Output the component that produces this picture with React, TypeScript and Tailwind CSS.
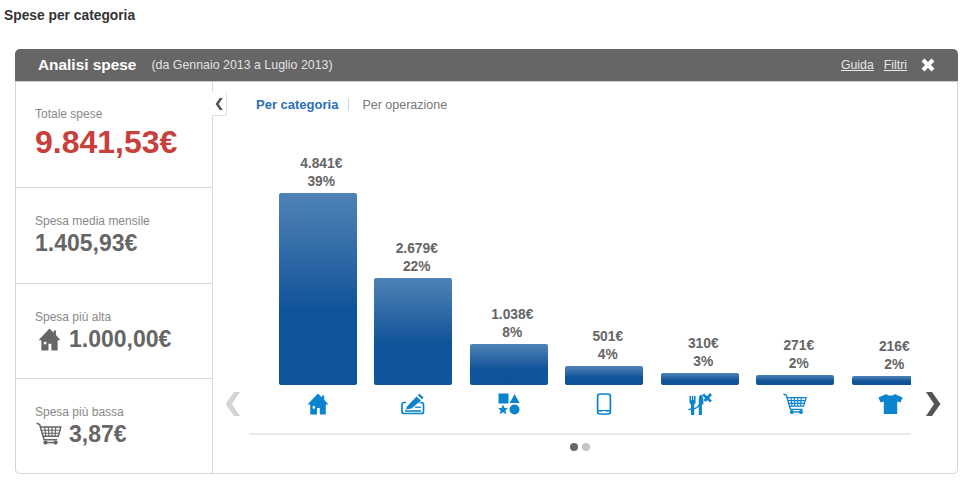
import { ReactNode } from "react";

const BLUE = "#0b84cf";

function HouseIcon({ color = BLUE, size = 22 }: { color?: string; size?: number }) {
  return (
    <svg width={size} height={size} viewBox="0 0 22 22">
      <path
        fill={color}
        d="M11 0.5 L15 4.5 V2.5 H17.2 V6.7 L21.5 11.6 H18.8 V21.5 H12.8 V15 H10 V21.5 H3.2 V11.6 H0.5 Z"
      />
      <rect x="5.6" y="13.2" width="2.4" height="2.4" fill="#fff" />
    </svg>
  );
}

function CheckIcon() {
  return (
    <svg width="24" height="22" viewBox="0 0 24 22">
      <rect x="1" y="9.5" width="21.5" height="11" rx="2" fill="none" stroke={BLUE} strokeWidth="1.7" />
      <path fill="#fff" d="M5 9 L17 0 L24 6 L12 14 H6 Z" />
      <path fill={BLUE} d="M6 13.5 L15.5 3.5 L20 7.5 L10.5 15.5 L5 16.5 Z" />
      <path fill={BLUE} d="M16.8 2.3 L18.4 0.8 L22.6 4.6 L21 6.2 Z" />
      <path stroke={BLUE} strokeWidth="1.6" d="M4 18 H20" />
      <path stroke={BLUE} strokeWidth="1.3" d="M14 14.2 H20" />
    </svg>
  );
}

function ShapesIcon() {
  return (
    <svg width="22" height="22" viewBox="0 0 22 22">
      <rect x="0.5" y="0.5" width="10" height="10" fill={BLUE} />
      <path fill={BLUE} d="M16.6 1 L21.6 10 H11.6 Z" />
      <path
        fill={BLUE}
        d="M5 11.6 L6.5 15 L10 15.3 L7.4 17.6 L8.2 21.2 L5 19.3 L1.8 21.2 L2.6 17.6 L0 15.3 L3.5 15 Z"
      />
      <circle cx="16.5" cy="16.5" r="5" fill={BLUE} />
    </svg>
  );
}

function PhoneIcon() {
  return (
    <svg width="16" height="22" viewBox="0 0 16 22">
      <rect x="1.6" y="1" width="12.8" height="20" rx="2.4" fill="none" stroke={BLUE} strokeWidth="1.7" />
      <path stroke={BLUE} strokeWidth="1.6" d="M2 17.8 H14" />
      <rect x="6.6" y="18" width="2.8" height="2" fill="#fff" />
    </svg>
  );
}

function DiningIcon() {
  return (
    <svg width="24" height="22" viewBox="0 0 24 22">
      <path fill={BLUE} d="M1.5 3 H3 V7 H3.8 V3 H5.3 V7 H6.1 V3 H7.6 V10 L6.2 11.5 V22 H3 V11.5 L1.5 10 Z" />
      <path fill={BLUE} d="M13 1.5 C15.4 3 15.6 7 15.4 11.5 H13.9 V22 H10.8 V6 C10.8 4 11.6 2.4 13 1.5 Z" />
      <path stroke={BLUE} strokeWidth="1.5" fill="none" d="M0.5 16.5 C4 16.5 8 15.8 11 13 M9.8 12.8 L12.4 12.2" />
      <path stroke={BLUE} strokeWidth="2.8" d="M15 1.5 L23 8.5 M23 1 L16.5 8" />
    </svg>
  );
}

function CartIcon({ color = BLUE, size = 24 }: { color?: string; size?: number }) {
  return (
    <svg width={size} height={size * (22 / 24)} viewBox="0 0 24 22">
      <path stroke={color} strokeWidth="1.4" fill="none" d="M0.5 1 L3.4 2.4 L7.4 16.4 H19.6" />
      <path stroke={color} strokeWidth="1.3" fill="none" d="M3.6 4.6 H23 L20.6 13.2 H6.2" />
      <path
        stroke={color}
        strokeWidth="1.1"
        fill="none"
        d="M4.4 7.6 H22 M5.2 10.4 H21.2 M8 5 L9 13 M11.4 5 L11.9 13 M14.8 5 L14.8 13 M18.2 5 L17.6 13"
      />
      <circle cx="8.8" cy="19" r="2" fill={color} />
      <circle cx="18" cy="19" r="2" fill={color} />
      <path stroke={color} strokeWidth="1.4" d="M8.8 19 H18" />
    </svg>
  );
}

function ShirtIcon() {
  return (
    <svg width="25" height="22" viewBox="0 0 25 22">
      <path
        fill={BLUE}
        d="M8.4 1 C9.5 3 15.5 3 16.6 1 L24.6 4.4 L22.4 9.6 L19.2 8.6 V21 H5.8 V8.6 L2.6 9.6 L0.4 4.4 Z"
      />
    </svg>
  );
}

function Chevron({ dir, color, w = 15, h = 24 }: { dir: "l" | "r"; color: string; w?: number; h?: number }) {
  return (
    <svg width={w} height={h} viewBox="0 0 15 24">
      <path
        fill={color}
        d={dir === "l" ? "M9 0 H15 L7 12 L15 24 H9 L0.5 12 Z" : "M6 0 H0 L8 12 L0 24 H6 L14.5 12 Z"}
      />
    </svg>
  );
}

const bars: { value: string; pct: string; h: number; icon: ReactNode }[] = [
  { value: "4.841€", pct: "39%", h: 192, icon: <HouseIcon /> },
  { value: "2.679€", pct: "22%", h: 107, icon: <CheckIcon /> },
  { value: "1.038€", pct: "8%", h: 41, icon: <ShapesIcon /> },
  { value: "501€", pct: "4%", h: 19, icon: <PhoneIcon /> },
  { value: "310€", pct: "3%", h: 12, icon: <DiningIcon /> },
  { value: "271€", pct: "2%", h: 10, icon: <CartIcon /> },
  { value: "216€", pct: "2%", h: 9, icon: <ShirtIcon /> },
];

function Stat({ label, className, children }: { label: string; className: string; children: ReactNode }) {
  return (
    <div className={`flex flex-col pl-[19px] border-b border-[#d9d9d9] last:border-b-0 ${className}`}>
      <div className="text-[12px] leading-[14px] text-[#888]">{label}</div>
      {children}
    </div>
  );
}

export default function App() {
  return (
    <div className="w-[964px] h-[486px] bg-white overflow-hidden font-['Liberation_Sans',Arial,sans-serif]">
      <div className="h-[49px] pl-[4px] pt-[8px] text-[13.8px] leading-[15px] font-bold text-[#333]">
        Spese per categoria
      </div>

      <div className="ml-[15px] w-[943px] h-[425px] flex flex-col rounded-[5px] border border-t-0 border-[#d4d4d4]">
        <div className="h-[33px] -mx-px flex items-center bg-[#666] rounded-t-[5px] border-b border-[#ccc] pl-[23px] text-white">
          <span className="text-[15.4px] font-bold">Analisi spese</span>
          <span className="ml-[15px] text-[12.4px] text-[#e2e2e2]">(da Gennaio 2013 a Luglio 2013)</span>
          <a className="ml-auto text-[12.3px] text-[#e6e6e6] underline">Guida</a>
          <a className="ml-[10px] text-[12.3px] text-[#e6e6e6] underline">Filtri</a>
          <svg className="ml-[14px] mr-[23px]" width="14" height="14" viewBox="0 0 14 14">
            <path stroke="#fff" strokeWidth="4" d="M2 2 L12 12 M12 2 L2 12" />
          </svg>
        </div>

        <div className="flex flex-1 min-h-0">
          <div className="w-[197px] shrink-0 flex flex-col border-r border-[#d9d9d9]">
            <Stat label="Totale spese" className="h-[106px] pt-[25px]">
              <div className="mt-[3px] text-[32px] leading-[36px] font-bold text-[#c8403c]">9.841,53€</div>
            </Stat>
            <Stat label="Spesa media mensile" className="h-[96px] pt-[26px]">
              <div className="mt-[2px] text-[23px] leading-[26px] font-bold text-[#666]">1.405,93€</div>
            </Stat>
            <Stat label="Spesa più alta" className="h-[95px] pt-[26px]">
              <div className="mt-[1px] ml-[3px] flex items-center gap-[8px] text-[23px] leading-[28px] font-bold text-[#666]">
                <HouseIcon color="#666" size={23} />
                1.000,00€
              </div>
            </Stat>
            <Stat label="Spesa più bassa" className="flex-1 pt-[26px]">
              <div className="mt-[1px] ml-[1px] flex items-center gap-[7px] text-[23px] leading-[28px] font-bold text-[#666]">
                <CartIcon color="#666" size={26} />
                3,87€
              </div>
            </Stat>
          </div>

          <div className="relative flex-1 flex">
            <div className="absolute -left-px top-[10px] w-[15px] h-[24px] flex items-center justify-center bg-white rounded-r-[3px] border-r border-b border-[#e2e2e2]">
              <Chevron dir="l" color="#555" w={8} h={12} />
            </div>

            <div className="w-[36px] shrink-0 flex justify-end flex-col pb-[57px] pl-[12px]">
              <Chevron dir="l" color="#d4d4d4" />
            </div>

            <div className="w-[662px] shrink-0 flex flex-col">
              <div className="h-[45px] flex items-start pt-[15px] pl-[7px] text-[13px] leading-[16px]">
                <span className="font-bold text-[#2a6fb5]">Per categoria</span>
                <span className="ml-[10px] mr-[13px] mt-[1px] h-[13px] border-l border-[#d5d5d5]" />
                <span className="text-[12.5px] text-[#777]">Per operazione</span>
              </div>

              <div className="flex-1 flex items-end pl-[21px] overflow-hidden">
                {bars.map((b) => (
                  <div key={b.value} className="w-[95.5px] shrink-0 flex flex-col items-center">
                    <div className="pl-[7px] text-[13.8px] leading-[18px] font-bold text-[#666] text-center mb-[2px]">
                      <div>{b.value}</div>
                      <div>{b.pct}</div>
                    </div>
                    <div
                      className="w-[78px] rounded-[2px] bg-gradient-to-b from-[#4f83b6] from-[0%] to-[#0f5499] to-[60%]"
                      style={{ height: b.h }}
                    />
                    <div className="h-[48px] pt-[8px] flex justify-center">{b.icon}</div>
                  </div>
                ))}
              </div>

              <div className="h-[40px] border-t-2 border-[#e9e9e9] flex justify-center items-start gap-[4px] pt-[8px]">
                <span className="w-[8px] h-[8px] rounded-full bg-[#666]" />
                <span className="w-[8px] h-[8px] rounded-full bg-[#c4c4c4]" />
              </div>
            </div>

            <div className="flex-1 flex justify-end flex-col pb-[57px] pl-[15px]">
              <Chevron dir="r" color="#555" />
            </div>
          </div>
        </div>
      </div>
    </div>
  );
}
